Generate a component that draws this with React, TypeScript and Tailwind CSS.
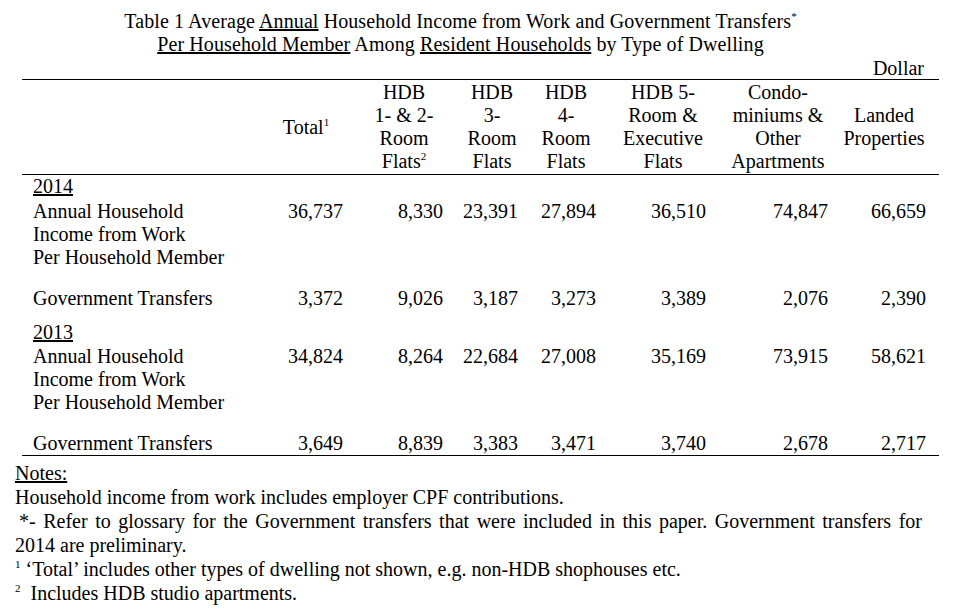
const columns = [
  { key: "total", pr: "pr-[14px]" },
  { key: "hdb12", pr: "pr-[8px]" },
  { key: "hdb3", pr: "pr-[15px]" },
  { key: "hdb4", pr: "pr-[3px]" },
  { key: "hdb5", pr: "pr-[21px]" },
  { key: "condo", pr: "pr-[1px]" },
  { key: "landed", pr: "pr-[13px]" },
];

const years = [
  {
    year: "2014",
    income: ["36,737", "8,330", "23,391", "27,894", "36,510", "74,847", "66,659"],
    transfers: ["3,372", "9,026", "3,187", "3,273", "3,389", "2,076", "2,390"],
  },
  {
    year: "2013",
    income: ["34,824", "8,264", "22,684", "27,008", "35,169", "73,915", "58,621"],
    transfers: ["3,649", "8,839", "3,383", "3,471", "3,740", "2,678", "2,717"],
  },
];

const grid = "grid grid-cols-[233px_102px_94px_82px_66px_128px_102px_110px]";

function Sup({ children }: { children: React.ReactNode }) {
  return <span className="relative -top-[8px] text-[11px] leading-none">{children}</span>;
}

function HeaderCell({ lines }: { lines: React.ReactNode[] }) {
  return (
    <div className="flex flex-col items-center justify-center text-center">
      {lines.map((line, i) => (
        <div key={i} className="whitespace-nowrap">
          {line}
        </div>
      ))}
    </div>
  );
}

function NumberRow({ label, values, className }: { label: React.ReactNode; values: string[]; className?: string }) {
  return (
    <div className={`${grid} ${className ?? ""}`}>
      <div className="pl-[11px]">{label}</div>
      {values.map((v, i) => (
        <div key={columns[i].key} className={`text-right ${columns[i].pr}`}>
          {v}
        </div>
      ))}
    </div>
  );
}

export default function App() {
  return (
    <div className="w-[960px] h-[609px] overflow-hidden bg-white text-black font-['Liberation_Serif','Times_New_Roman',serif] text-[20px] leading-[23px]">
      {/* title */}
      <div className="w-[921px] pt-[10px] text-center leading-[23.4px] tracking-[0.1px]">
        <div>
          Table 1 Average <span className="underline">Annual</span> Household Income from Work and Government Transfers
          <Sup>*</Sup>
        </div>
        <div>
          <span className="underline">Per Household Member</span> Among{" "}
          <span className="underline">Resident Households</span> by Type of Dwelling
        </div>
      </div>

      <div className="ml-[22px] w-[917px]">
        <div className="h-[22px] leading-[22px] text-right pr-[15px]">Dollar</div>

        <div className="border-t border-b border-black">
          {/* header */}
          <div className={`${grid} h-[95px] pt-[1px] border-b border-black`}>
            <div />
            <HeaderCell lines={[<>Total<Sup>1</Sup></>]} />
            <HeaderCell lines={["HDB", "1- & 2-", "Room", <>Flats<Sup>2</Sup></>]} />
            <HeaderCell lines={["HDB", "3-", "Room", "Flats"]} />
            <HeaderCell lines={["HDB", "4-", "Room", "Flats"]} />
            <HeaderCell lines={["HDB 5-", "Room &", "Executive", "Flats"]} />
            <HeaderCell lines={["Condo-", "miniums &", "Other", "Apartments"]} />
            <HeaderCell lines={["Landed", "Properties"]} />
          </div>

          {/* body */}
          {years.map((y) => (
            <div key={y.year}>
              <div className={`pl-[11px] ${y.year === "2014" ? "h-[25px]" : "mt-[11px] h-[24px]"}`}>
                <span className="underline">{y.year}</span>
              </div>
              <NumberRow
                label={
                  <>
                    <div>Annual Household</div>
                    <div>Income from Work</div>
                    <div>Per Household Member</div>
                  </>
                }
                values={y.income}
              />
              <NumberRow
                label="Government Transfers"
                values={y.transfers}
                className={y.year === "2014" ? "mt-[18px]" : "mt-[18px]"}
              />
            </div>
          ))}
        </div>
      </div>

      {/* notes */}
      <div className="ml-[15px] w-[907px] pt-[5px] leading-[24px]">
        <div>
          <span className="underline">Notes:</span>
        </div>
        <div>Household income from work includes employer CPF contributions.</div>
        <div className="pl-[4px] text-justify [text-align-last:justify]">
          *- Refer to glossary for the Government transfers that were included in this paper. Government transfers for
        </div>
        <div>2014 are preliminary.</div>
        <div>
          <Sup>1</Sup> ‘Total’ includes other types of dwelling not shown, e.g. non-HDB shophouses etc.
        </div>
        <div>
          <Sup>2</Sup>
          <span className="pl-[10px]">Includes HDB studio apartments.</span>
        </div>
      </div>
    </div>
  );
}
